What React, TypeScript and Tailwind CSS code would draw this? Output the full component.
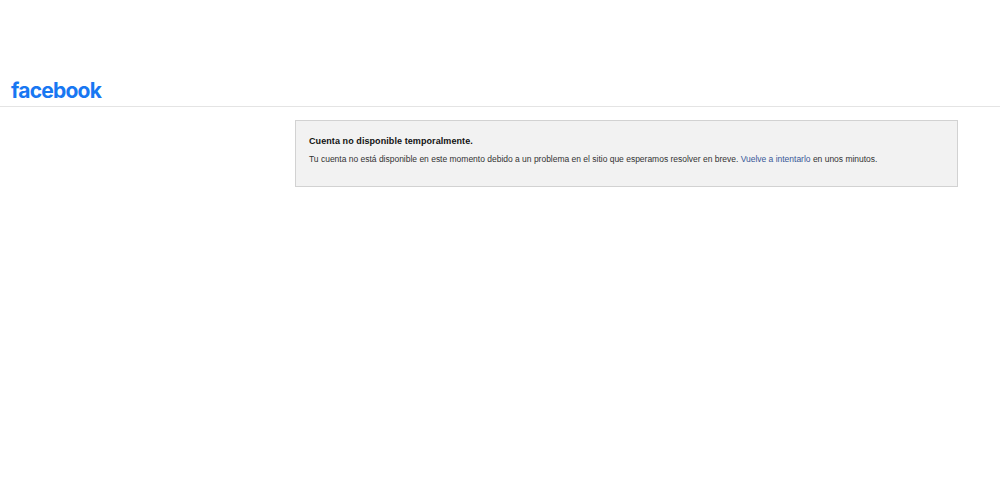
export default function App() {
    return (
        <div className="h-[500px] w-[1000px] overflow-hidden bg-white font-['Liberation_Sans',sans-serif]">
            <header className="flex h-[107px] items-end border-b border-[#e4e4e4] pb-[1px] pl-[11px]">
                <span className="font-['Inter',sans-serif] text-[21px] leading-[28px] font-bold tracking-[-0.75px] text-[#1877f2]">
                    facebook
                </span>
            </header>
            <main className="pt-[13px] pl-[295px]">
                <div className="h-[67px] w-[663px] border border-[#d2d2d2] bg-[#f2f2f2] px-[13px] pt-[14px]">
                    <h1 className="text-[9px] leading-[13px] font-bold tracking-[0.08px] text-[#111111]">
                        Cuenta no disponible temporalmente.
                    </h1>
                    <p className="mt-[5px] text-[8.5px] leading-[13px] tracking-[-0.012px] text-[#333333]">
                        Tu cuenta no está disponible en este momento debido a un problema en el sitio que esperamos resolver en breve.{" "}
                        <a href="#" className="text-[#385898]">Vuelve a intentarlo</a> en unos minutos.
                    </p>
                </div>
            </main>
        </div>
    )
}
